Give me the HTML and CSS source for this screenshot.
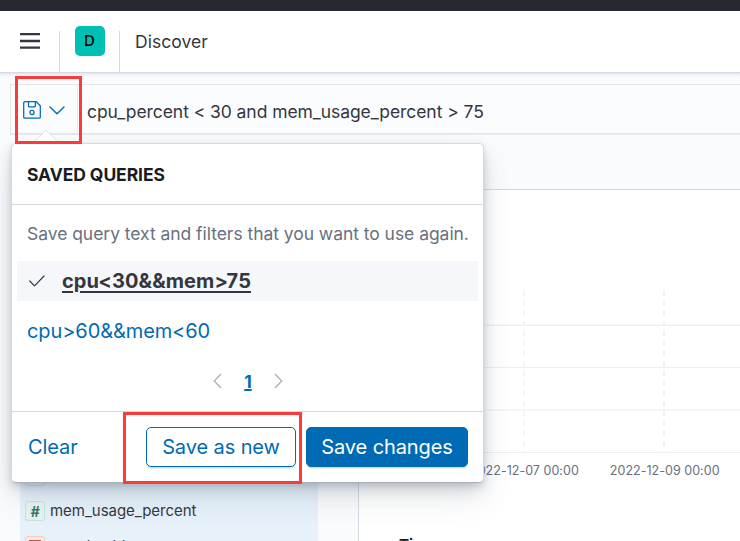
FILE: index.html
```html
<!DOCTYPE html>
<html lang="en">
<head>
<meta charset="utf-8">
<title>Discover</title>
<link rel="stylesheet" href="styles.css">
</head>
<body>
<div class="topbar"></div>
<header class="header">
  <button class="menu" aria-label="Menu"><svg width="20" height="16" viewBox="0 0 20 16"><path d="M0 1.2h20M0 8h20M0 14.7h20" stroke="#343741" stroke-width="2.3"/></svg></button>
  <div class="space"><span class="avatar">D</span></div>
  <div class="crumb">Discover</div>
</header>
<div class="querybar">
  <button class="saved" aria-label="Saved queries">
    <svg width="18" height="18" viewBox="0 0 18 18" fill="none" stroke="#006bb4" stroke-width="1.25"><path d="M1.8.7h11.4L17.3 4.800V16.200a1 1 0 0 1-1 1H1.700a1 1 0 0 1-1-1V1.800a1 1 0 0 1 1-1ZM5.500.8v4.400a.6.6 0 0 0 .6.6h5.600a.6.6 0 0 0 .6-.6V.8"/><circle cx="9" cy="11.500" r="2.100"/></svg>
    <svg width="16" height="9" viewBox="0 0 16 9" fill="none" stroke="#006bb4" stroke-width="1.4" stroke-linecap="round"><path d="m1 1 7 6.700L15 1"/></svg>
  </button>
  <div class="query">cpu_percent &lt; 30 and mem_usage_percent &gt; 75</div>
</div>
<main class="content">
  <aside class="sidebar">
    <div class="fields">
      <div class="field"><span class="token"></span></div>
      <div class="field"><span class="token">#</span><span>mem_usage_percent</span></div>
      <div class="field"><span class="token date"><svg width="12" height="12" viewBox="0 0 12 12"><path d="M1 1h10v10H1zM1 3h10" fill="none" stroke="#bd5b4b" stroke-width="2"/></svg></span><span class="next">event_addr</span></div>
    </div>
  </aside>
  <section class="results">
    <svg class="chart" width="381" height="164" viewBox="359 290 381 164">
      <path d="M359 325.300h381M359 367.500h381M359 410h381M359 452.500h381" stroke="#eceef2" stroke-width="1.2"/>
      <path d="M524.300 291v161M664 291v161" stroke="#eff1f5" stroke-width="1.6" stroke-dasharray="5 5"/>
    </svg>
    <div class="axis"><span>2022-12-07 00:00</span><span>2022-12-09 00:00</span></div>
    <div class="time">Time</div>
  </section>
</main>
<section class="popover">
  <svg class="arrow" width="26" height="15" viewBox="0 0 26 15"><path d="M0 14 13 1l13 13v1H0z" fill="#fff"/><path d="M0 14 13 1l13 13" fill="none" stroke="#dfe3ed"/></svg>
  <h2 class="title">SAVED QUERIES</h2>
  <div class="body">
    <p class="desc">Save query text and filters that you want to use again.</p>
    <div class="item selected"><svg width="16" height="12" viewBox="0 0 16 12" fill="none" stroke="#343741" stroke-width="1.200" stroke-linecap="round" stroke-linejoin="round"><path d="m.8 6 4.700 4.800L15 1"/></svg><span class="selname">cpu&lt;30&amp;&amp;mem&gt;75</span></div>
    <div class="item link"><span>cpu&gt;60&amp;&amp;mem&lt;60</span></div>
    <nav class="pages">
      <svg width="9" height="16" viewBox="0 0 9 16" fill="none" stroke="#aeb0b5" stroke-width="1.300"><path d="M8 1 1.200 8 8 15"/></svg>
      <span class="page">1</span>
      <svg width="9" height="16" viewBox="0 0 9 16" fill="none" stroke="#aeb0b5" stroke-width="1.300"><path d="m1 1 6.800 7L1 15"/></svg>
    </nav>
  </div>
  <footer class="footer">
    <button class="clear">Clear</button>
    <button class="btn outline">Save as new</button>
    <button class="btn fill">Save changes</button>
  </footer>
</section>
<div class="mark mark-toggle"></div>
<div class="mark mark-save"></div>
</body>
</html>
```
FILE: styles.css
```css
* { box-sizing: border-box; }
html { overflow: hidden; height: 541px; }
body { margin: 0; width: 740px; height: 541px; overflow: hidden; position: relative; background: #fafbfd; color: #343741; font-family: Inter, "Liberation Sans", sans-serif; font-size: 17.5px; letter-spacing: -0.065px; }
button { padding: 0; border: 0; background: none; font: inherit; letter-spacing: inherit; color: inherit; }
svg { display: block; flex: none; }
.topbar { height: 11px; background: #25282f; }
.header { display: flex; height: 62px; background: #fff; border-bottom: 1px solid #d3dae6; box-shadow: 0 1px 3px rgba(100,110,140,.22); }
.menu { width: 59px; display: flex; align-items: center; justify-content: center; }
.menu svg { margin-bottom: 1px; margin-left: 1px; }
.space { width: 61px; margin-top: 20px; border: solid #d3dae6; border-width: 0 1px; display: flex; justify-content: center; }
.avatar { width: 30px; height: 30px; margin-top: -5px; border-radius: 5px; background: #00bfb3; color: #000; font-size: 15px; font-weight: 500; line-height: 30px; text-align: center; }
.crumb { padding-left: 15px; line-height: 61px; letter-spacing: .05px; }
.querybar { display: flex; height: 51px; margin: 11px 0 0 10px; border: 1px solid #e0e5ee; border-right: 0; border-bottom: 2px solid #e5e8f0; background: #fbfcfd; }
.saved { width: 67px; padding-left: 12px; display: flex; align-items: center; gap: 8px; border-right: 1px solid #e5e9f1; }
.saved svg { margin-top: 2px; }
.query { padding-left: 9px; line-height: 54px; white-space: nowrap; }
.content { display: flex; height: 352px; margin-top: 54px; }
.sidebar { width: 358px; flex: none; padding: 258px 40px 0 20px; }
.fields { height: 94px; overflow: hidden; background: #e6f1fa; padding: 11px 0 0 5px; font-size: 15px; }
.field { display: flex; align-items: center; gap: 5px; height: 35px; line-height: 20px; letter-spacing: -.02px; }
.token { width: 20px; height: 20px; border: 1px solid #c5e5dc; border-radius: 3px; background: #e8f2f1; color: #387765; font-size: 14px; font-weight: 700; font-style: italic; line-height: 19px; text-align: center; }
.date { border-color: #f6c9c2; background: #fbe9e6; display: flex; align-items: center; justify-content: center; }
.next { padding-left: 2px; letter-spacing: .1px; }
.results { flex: 1; overflow: hidden; border: solid #d3dae6; border-width: 1px 0 0 1px; background: #fff; }
.chart { margin-top: 100px; }
.axis { display: flex; gap: 31px; padding-left: 111px; margin-top: 8px; font-size: 12.5px; line-height: 17px; color: #69707d; letter-spacing: .03px; white-space: nowrap; }
.time { margin: 56px 0 0 40px; font-weight: 700; font-size: 15px; line-height: 20px; color: #1a1c21; }
.popover { position: absolute; left: 11px; top: 143px; width: 473px; height: 340px; display: flex; flex-direction: column; background: #fff; border: 1px solid #d3dae6; border-bottom-color: #a9adb9; border-radius: 5px; box-shadow: 0 15px 31px -2px rgba(65,78,101,.16), 0 7px 15px -2px rgba(65,78,101,.18), 0 3px 7px -1px rgba(65,78,101,.2); }
.arrow { position: absolute; left: 21px; top: -15px; }
.title { height: 61px; margin: 0; padding-left: 15px; border-bottom: 1px solid #d3dae6; color: #1a1c21; font-size: 17.5px; font-weight: 650; line-height: 61px; letter-spacing: -.08px; }
.body { flex: 1; padding: 0 5px; }
.desc { margin: 0; padding: 0 10px; height: 56px; line-height: 58px; color: #69707d; white-space: nowrap; letter-spacing: -.045px; }
.item { display: flex; align-items: center; height: 40px; padding-left: 10px; font-size: 20px; letter-spacing: -.1px; }
.selected { background: #f5f7fa; gap: 17px; padding-left: 12px; }
.selname { font-weight: 700; letter-spacing: .1px; text-decoration: underline; text-decoration-thickness: 2px; text-underline-offset: 3px; }
.link { margin-top: 10px; color: #006bb4; }
.pages { height: 50px; display: flex; justify-content: center; align-items: center; gap: 20px; padding-top: 7px; margin-top: 2px; padding-left: 1px; }
.page { width: 10px; margin: 0 1px; text-align: center; color: #006bb4; font-size: 17.5px; font-weight: 700; text-decoration: underline; text-decoration-thickness: 2px; }
.pages svg { margin-top: -2px; }
.footer { height: 71px; padding: 0 15px 0 16px; border-top: 1px solid #d3dae6; display: flex; align-items: center; gap: 10px; font-size: 20px; letter-spacing: -.1px; }
.clear { color: #006bb4; margin-right: auto; }
.btn { height: 40px; border: 1px solid #006bb4; border-radius: 5px; box-shadow: 0 2px 2px -1px rgba(54,97,126,.3); white-space: nowrap; }
.outline { width: 150px; color: #006bb4; }
.fill { width: 162px; background: #006bb4; color: #fff; }
.mark { position: absolute; border: 3px solid #fb3b3b; }
.mark-toggle { left: 15px; top: 76px; width: 67px; height: 68px; }
.mark-save { left: 123px; top: 412px; width: 179px; height: 72px; }
```
